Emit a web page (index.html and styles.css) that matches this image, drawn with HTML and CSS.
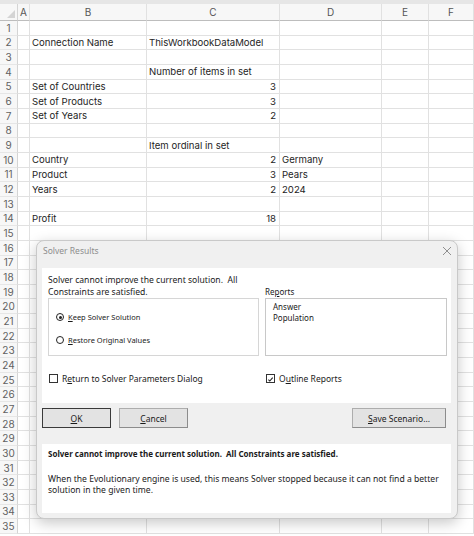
FILE: index.html
```html
<!DOCTYPE html>
<html lang="en">
<head>
  <meta charset="UTF-8">
  <meta name="viewport" content="width=device-width, initial-scale=1.0">
  <title>Solver Results</title>
  <link rel="stylesheet" href="styles.css">
</head>
<body>
  <div class="topbar"></div>
  <div class="sheet" id="sheet"></div>

  <div class="dialog">
    <div class="title-bar">
      <span class="title">Solver Results</span>
      <svg class="close" width="10" height="10" viewBox="0 0 10 10">
        <path d="M1 1 L9 9 M9 1 L1 9" stroke="#8f8f8f" stroke-width="1" fill="none"/>
      </svg>
    </div>

    <div class="panel main">
      <div class="left">
        <p class="msg">Solver cannot improve the current solution.&nbsp; All<br>Constraints are satisfied.</p>
        <div class="group">
          <div class="radio"><span class="dot on"></span><span><u>K</u>eep Solver Solution</span></div>
          <div class="radio"><span class="dot"></span><span><u>R</u>estore Original Values</span></div>
        </div>
      </div>
      <div class="right">
        <div class="rep-label">Re<u>p</u>orts</div>
        <div class="list">
          <div>Answer</div>
          <div>Population</div>
        </div>
      </div>
      <div class="check"><span class="box"></span><span>R<u>e</u>turn to Solver Parameters Dialog</span></div>
      <div class="check outline"><span class="box checked">
        <svg width="9" height="9" viewBox="0 0 9 9"><path d="M1.8 4.6 L3.6 6.5 L7.3 2.2" stroke="#222" stroke-width="1.4" fill="none"/></svg>
      </span><span>O<u>u</u>tline Reports</span></div>
    </div>

    <div class="buttons">
      <button class="btn default"><u>O</u>K</button>
      <button class="btn"><u>C</u>ancel</button>
      <button class="btn save"><u>S</u>ave Scenario...</button>
    </div>

    <div class="panel info">
      <p class="bold">Solver cannot improve the current solution.&nbsp; All Constraints are satisfied.</p>
      <p class="note">When the Evolutionary engine is used, this means Solver stopped because it can not find a better solution in the given time.</p>
    </div>
  </div>

  <script>
    const cols = ["", "A", "B", "C", "D", "E", "F"];
    const cells = {
      2: { B: "Connection Name", C: "ThisWorkbookDataModel" },
      4: { C: "Number of items in set" },
      5: { B: "Set of Countries", C: 3 },
      6: { B: "Set of Products", C: 3 },
      7: { B: "Set of Years", C: 2 },
      9: { C: "Item ordinal in set" },
      10: { B: "Country", C: 2, D: "Germany" },
      11: { B: "Product", C: 3, D: "Pears" },
      12: { B: "Years", C: 2, D: "2024" },
      14: { B: "Profit", C: 18 }
    };

    const sheet = document.getElementById("sheet");
    let html = "";
    cols.forEach((c, i) => {
      html += i === 0
        ? `<div class="corner"><span class="tri"></span></div>`
        : `<div class="col-head">${c}</div>`;
    });
    for (let r = 1; r <= 35; r++) {
      html += `<div class="row-head">${r}</div>`;
      cols.slice(1).forEach(c => {
        const v = (cells[r] || {})[c];
        const num = typeof v === "number";
        html += `<div class="cell${num ? " num" : ""}">${v === undefined ? "" : v}</div>`;
      });
    }
    sheet.innerHTML = html;
  </script>
</body>
</html>
```

FILE: styles.css
```css
body {
  margin: 0;
  background: #ffffff;
  font-family: Inter, "Liberation Sans", sans-serif;
  color: #222;
  overflow: hidden;
}
.topbar {
  height: 4px;
  background: #e6e6e6;
}
.sheet {
  display: grid;
  grid-template-columns: 18px 12px 117px 133px 102px 47px 1fr;
  grid-template-rows: 17px repeat(35, 14.67px);
}
.corner {
  background: #f7f7f7;
  border-right: 1px solid #d4d4d4;
  border-bottom: 1px solid #bdbdbd;
  position: relative;
}
.tri {
  position: absolute;
  right: 2px;
  bottom: 2px;
  width: 0;
  height: 0;
  border-left: 8px solid transparent;
  border-bottom: 8px solid #d4d4d4;
}
.col-head {
  background: #f7f7f7;
  border-right: 1px solid #e1e1e1;
  border-bottom: 1px solid #bdbdbd;
  color: #555;
  font-size: 10px;
  display: flex;
  align-items: center;
  justify-content: center;
}
.row-head {
  background: #f7f7f7;
  border-right: 1px solid #d4d4d4;
  border-bottom: 1px solid #e6e6e6;
  color: #616161;
  font-size: 10px;
  display: flex;
  align-items: center;
  justify-content: center;
}
.cell {
  border-right: 1px solid #e1e1e1;
  border-bottom: 1px solid #e1e1e1;
  font-size: 9.6px;
  color: #1e1e1e;
  padding: 0 2px;
  display: flex;
  align-items: center;
  white-space: nowrap;
  overflow: visible;
}
.cell.num {
  justify-content: flex-end;
  padding-right: 3px;
}

/* dialog */
.dialog {
  position: absolute;
  left: 36px;
  top: 240px;
  width: 422px;
  height: 279px;
  box-sizing: border-box;
  background: #f0f0f0;
  border: 1px solid #c9c9c9;
  border-radius: 8px;
  box-shadow: 0 4px 14px rgba(0, 0, 0, 0.22);
  padding: 0 6px 0 5px;
  font-family: "Noto Sans", "Liberation Sans", sans-serif;
  font-size: 8.6px;
  color: #1a1a1a;
}
.title-bar {
  height: 27px;
  display: flex;
  align-items: flex-start;
  justify-content: space-between;
  padding-top: 4px;
  box-sizing: border-box;
}
.title {
  color: #8d8d8d;
  font-size: 8.5px;
  line-height: 12px;
  padding-left: 1px;
}
.close {
  margin: 1px -1px 0 0;
}
.panel {
  background: #ffffff;
  box-sizing: border-box;
}
.main {
  height: 135px;
  padding: 6px 4px 0 6px;
  display: grid;
  grid-template-columns: 211px 1fr;
  align-content: start;
  column-gap: 6px;
  row-gap: 16px;
}
.msg {
  margin: 0;
  line-height: 12px;
  height: 24px;
}
.group {
  height: 58px;
  box-sizing: border-box;
  border: 1px solid #d6d6d6;
  padding: 12px 0 0 7px;
  display: flex;
  flex-direction: column;
  gap: 11px;
  font-size: 7.5px;
}
.radio, .check {
  display: flex;
  align-items: center;
  gap: 4px;
  height: 12px;
}
.dot {
  width: 8px;
  height: 8px;
  box-sizing: border-box;
  border: 1px solid #222;
  border-radius: 50%;
  position: relative;
}
.dot.on::after {
  content: "";
  position: absolute;
  left: 1.5px;
  top: 1.5px;
  width: 3px;
  height: 3px;
  border-radius: 50%;
  background: #222;
}
.right {
  align-self: end;
}
.rep-label {
  line-height: 12px;
  font-size: 8px;
}
.list {
  height: 58px;
  box-sizing: border-box;
  border: 1px solid #c8c8c8;
  padding: 2px 0 0 7px;
  line-height: 11px;
  font-size: 8px;
}
.check {
  padding-left: 1px;
  font-size: 8.5px;
}
.box {
  width: 9px;
  height: 9px;
  box-sizing: border-box;
  border: 1px solid #333;
  display: flex;
}
.buttons {
  height: 41px;
  box-sizing: border-box;
  padding-top: 5px;
  display: flex;
  gap: 8px;
}
.btn {
  width: 69px;
  height: 20px;
  background: #e3e3e3;
  border: 1px solid #adadad;
  border-right-color: #8c8c8c;
  border-bottom-color: #8c8c8c;
  font-family: "Noto Sans", "Liberation Sans", sans-serif;
  font-size: 8.5px;
  color: #1a1a1a;
  padding: 0;
}
.btn.default {
  border: 1px solid #3a3a3a;
  box-shadow: inset 0 0 0 1px #e3e3e3;
}
.btn.save {
  width: 94px;
  margin-left: auto;
  margin-right: 5px;
}
.info {
  height: 69px;
  padding: 4px 6px 0 6px;
}
.info p {
  margin: 0;
}
.bold {
  font-weight: bold;
  font-size: 8px;
  line-height: 12px;
}
.note {
  margin-top: 14px !important;
  line-height: 11px;
}
```
